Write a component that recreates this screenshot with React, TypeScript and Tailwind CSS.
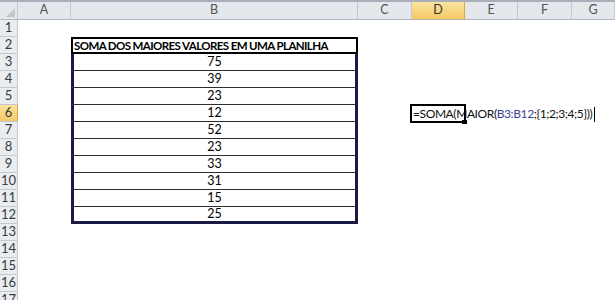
const cols = [
  { key: "A", w: "w-[53px]" },
  { key: "B", w: "w-[287px]" },
  { key: "C", w: "w-[54px]" },
  { key: "D", w: "w-[53px]" },
  { key: "E", w: "w-[53px]" },
  { key: "F", w: "w-[54px]" },
  { key: "G", w: "flex-1" },
];

const values = [75, 39, 23, 12, 52, 23, 33, 31, 15, 25];

const rowHeader =
  "w-[18px] shrink-0 h-full flex items-center justify-center border-r border-b border-[#c5c9cf] text-[13px] text-[#3b3b3b]";

const RowLabel = ({ n }: { n: number }) => (
  <div
    className={
      n === 6
        ? rowHeader + " bg-gradient-to-b from-[#fbe39a] to-[#f4c96a] border-r-[#e0a93c]"
        : rowHeader + " bg-[#e9ecf0]"
    }>
    {n}
  </div>
);

const bCell = (n: number) => {
  if (n === 2)
    return "border-2 border-black font-bold text-[11.5px] pl-[1px] flex items-center text-black tracking-[-0.6px] whitespace-nowrap overflow-hidden";
  if (n >= 3 && n <= 12) {
    const base =
      "border-x-[3px] border-x-[#1b1a45] flex items-center justify-center text-[12.5px] text-black";
    return n === 12
      ? base + " border-b-[3px] border-b-[#1b1a45]"
      : base + " border-b border-b-[#2e2e2e]";
  }
  return "";
};

const Formula = () => (
  <div className="absolute -left-[2px] -top-[1px] w-[56px] h-[19px] border-2 border-black z-10">
    <div className="absolute left-[1px] top-[0px] whitespace-nowrap text-[12px] tracking-[-0.4px] leading-[16px] text-[#111]">
      =SOMA(MAIOR(<span className="text-[#3b3f9a]">B3:B12</span>;{"{1;2;3;4;5}"}))
      <span className="inline-block w-px h-[15px] bg-black align-middle ml-[2px]" />
    </div>
    <div className="absolute -right-[3px] -bottom-[3px] w-[5px] h-[4px] bg-black" />
  </div>
);

export default function App() {
  const rows = Array.from({ length: 17 }, (_, i) => i + 1);
  return (
    <div className="w-[615px] h-[300px] overflow-hidden bg-white font-['Lato','Liberation_Sans',sans-serif]">
      <div className="h-[2px] bg-[#a9afb8]" />
      <div className="h-[18px] flex border-b border-[#b3b8bf] bg-[#e4e7eb]">
        <div className="w-[18px] shrink-0 border-r border-[#c5c9cf] relative">
          <svg className="absolute right-[2px] bottom-[2px]" width="9" height="9" viewBox="0 0 9 9">
            <polygon points="9,0 9,9 0,9" fill="#c2c7cd" />
          </svg>
        </div>
        {cols.map((c) => (
          <div
            key={c.key}
            className={
              c.w +
              " shrink-0 flex items-center justify-center text-[12.5px] border-r " +
              (c.key === "D"
                ? "bg-gradient-to-b from-[#fbe49c] to-[#f3c967] border-[#e0a93c] text-[#333]"
                : "border-[#c5c9cf] text-[#555]")
            }>
            {c.key}
          </div>
        ))}
      </div>
      {rows.map((n) => (
        <div key={n} className="h-[17px] flex">
          <RowLabel n={n} />
          {cols.map((c) => (
            <div
              key={c.key}
              className={c.w + " shrink-0 h-full " + (c.key === "B" ? bCell(n) : "") + (c.key === "D" && n === 6 ? " relative" : "")}>
              {c.key === "B" && n === 2 && "SOMA DOS MAIORES VALORES EM UMA PLANILHA"}
              {c.key === "B" && n >= 3 && n <= 12 && values[n - 3]}
              {c.key === "D" && n === 6 && <Formula />}
            </div>
          ))}
        </div>
      ))}
    </div>
  );
}
